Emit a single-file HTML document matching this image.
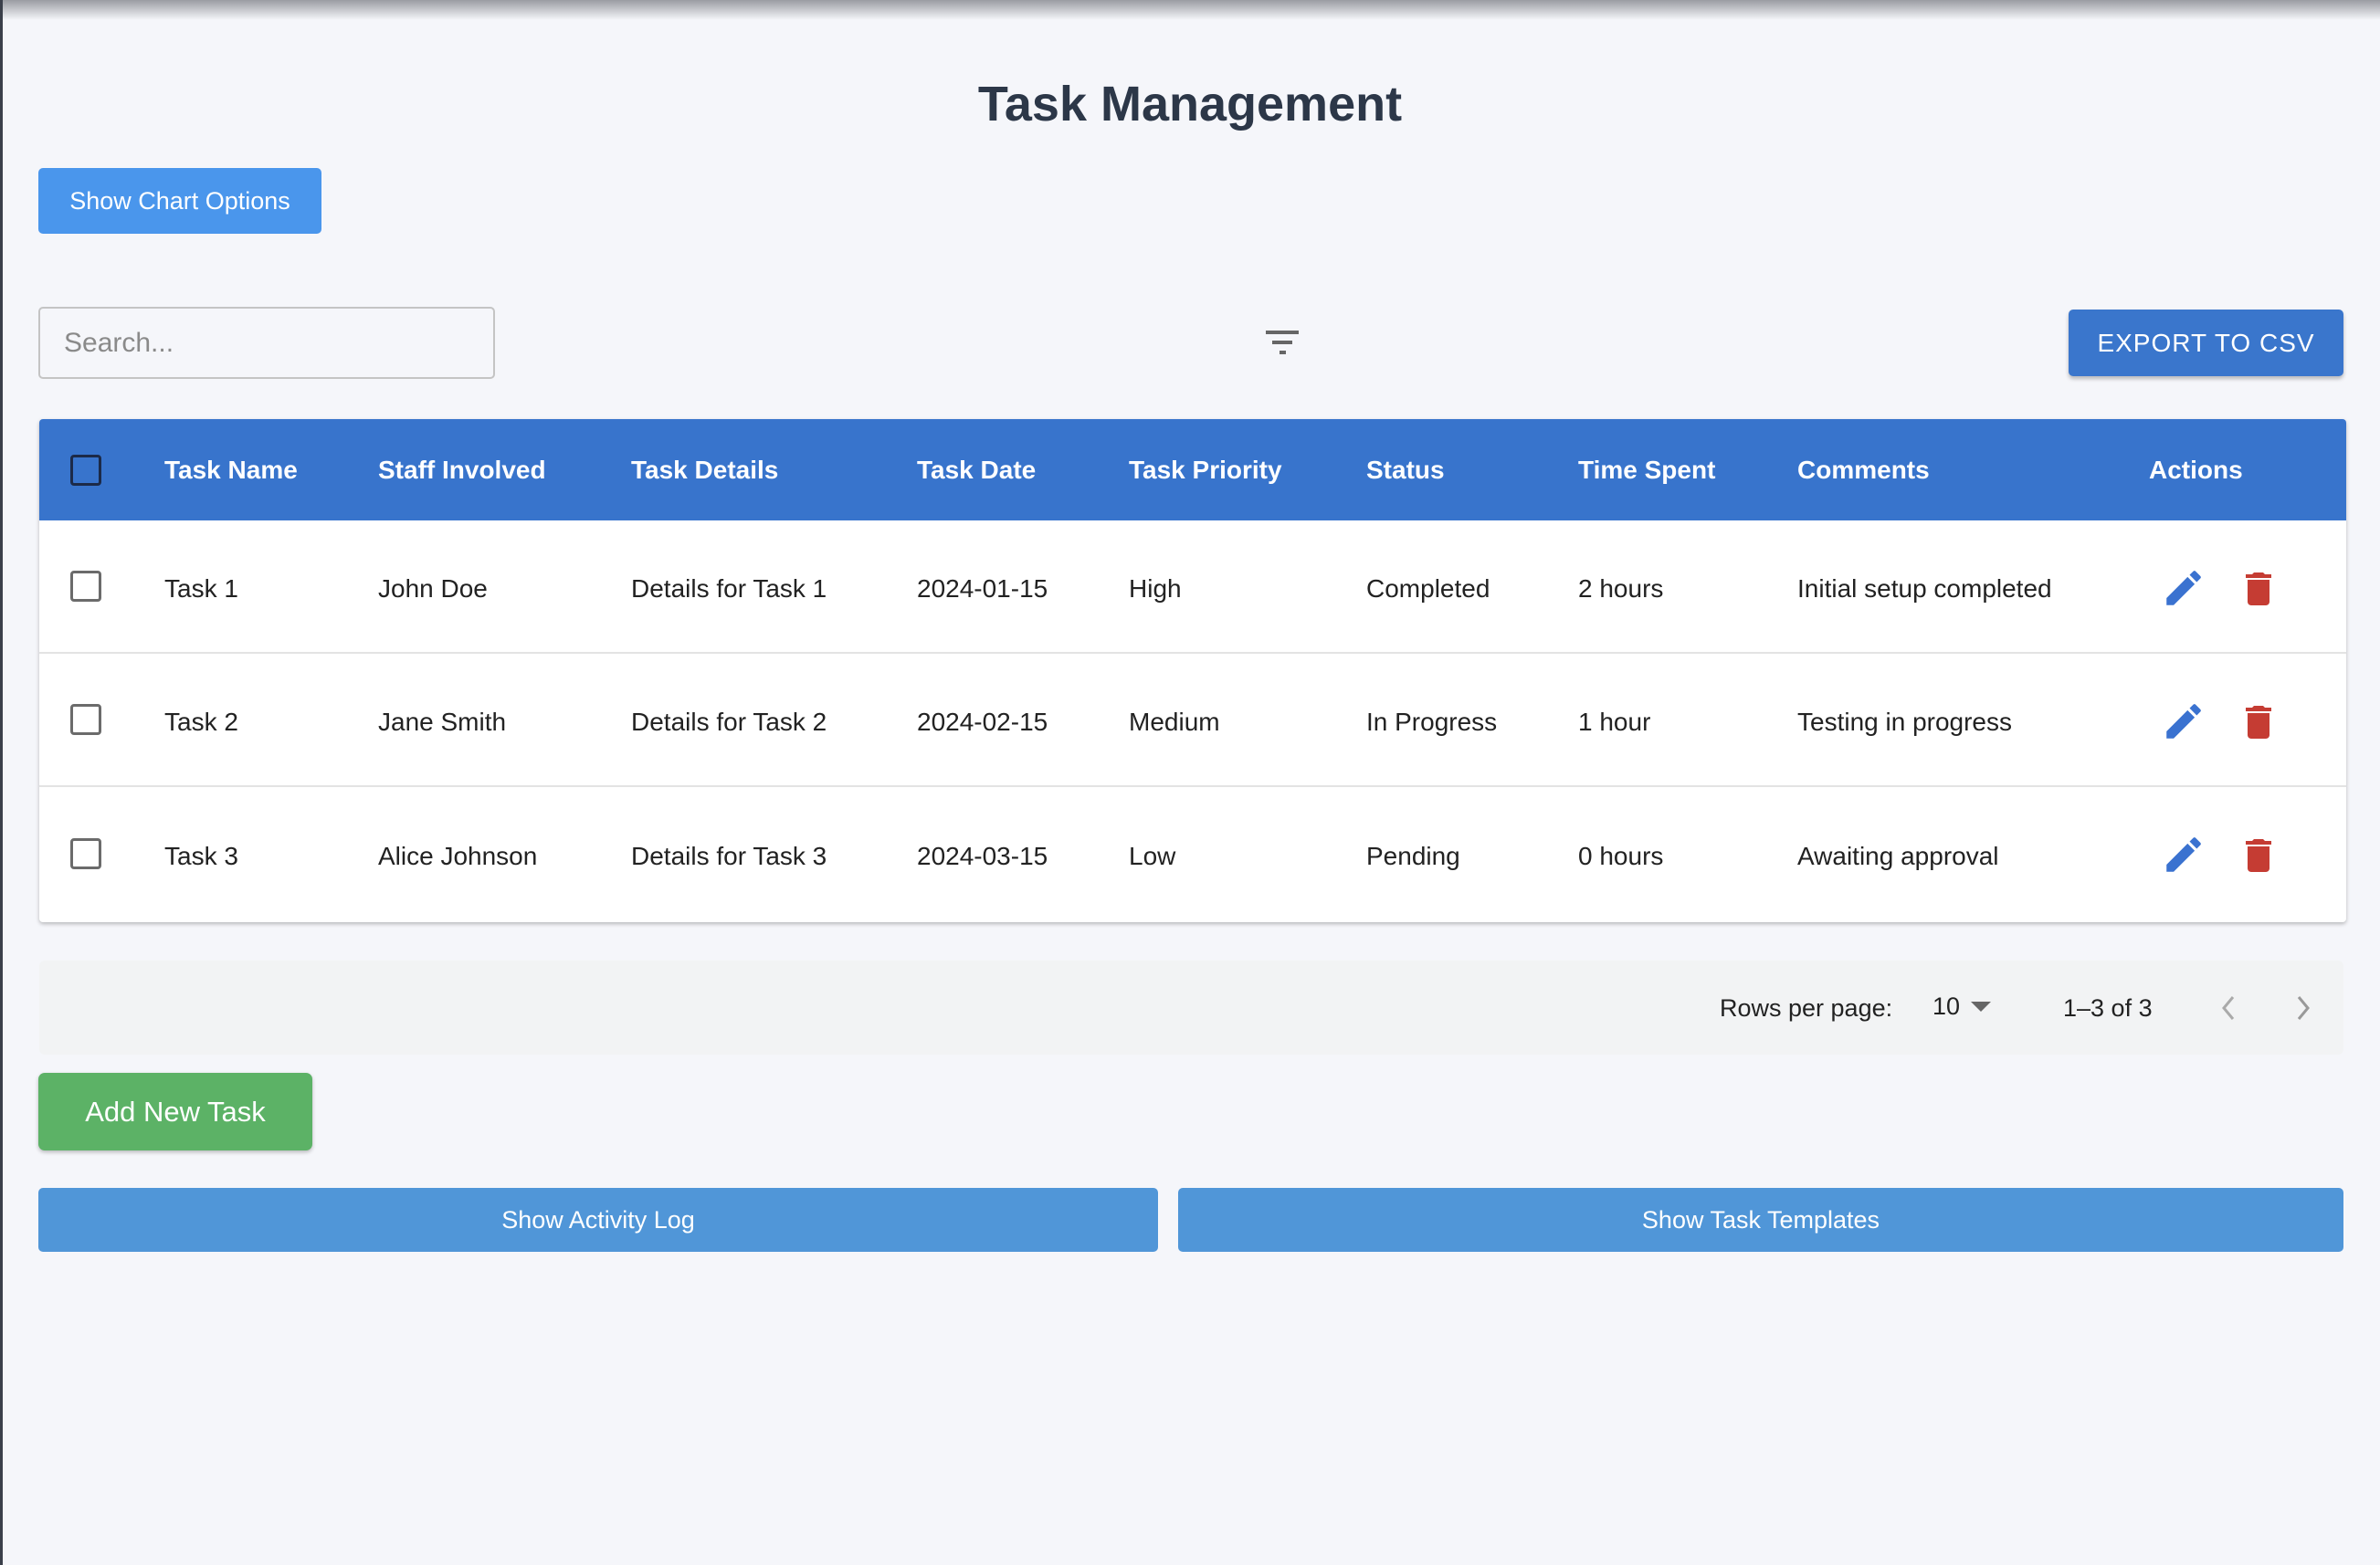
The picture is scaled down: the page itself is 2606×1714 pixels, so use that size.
<!DOCTYPE html>
<html><head><meta charset="utf-8"><style>
*{box-sizing:border-box;margin:0;padding:0}
body{width:2606px;height:1714px;background:#f5f6fa;font-family:"Liberation Sans",Arial,sans-serif;position:relative;overflow:hidden;color:#222}
.abs{position:absolute}
.topsh{left:0;top:0;width:2606px;height:22px;background:linear-gradient(#9a9ca2,#f5f6fa)}
.lb{left:0;top:0;width:3px;height:1714px;background:#3a3f4a}
h1{position:absolute;left:0;width:2606px;top:83px;text-align:center;font-size:54px;font-weight:bold;color:#2c3748}
.btn{position:absolute;color:#fff;display:flex;align-items:center;justify-content:center;border-radius:5px}
.table{left:43px;top:459px;width:2526px;height:551px;background:#fff;box-shadow:0 2px 4px rgba(0,0,0,.25);border-radius:4px;overflow:hidden}
.hdr{left:0;top:0;width:2526px;height:111px;background:#3874cc}
.row{left:0;width:2526px;height:146px;border-bottom:2px solid #e3e3e3}
.c{position:absolute;font-size:28px;top:50%;transform:translateY(-50%);white-space:nowrap}
.row .c{margin-top:3px}
.hdr .c{color:#fff;font-weight:bold}
.cb{position:absolute;left:34px;top:50%;transform:translateY(-50%);width:34px;height:34px;border:3px solid #6b6b6b;border-radius:4px}
</style></head><body>
<div class="abs topsh"></div><div class="abs lb"></div>
<h1>Task Management</h1>
<div class="btn" style="left:42px;top:184px;width:310px;height:72px;background:#4a96ec;font-size:27px">Show Chart Options</div>
<div class="abs" style="left:42px;top:336px;width:500px;height:79px;border:2px solid #c4c4c4;border-radius:5px;font-size:30px;color:#8a8a8a;padding:21px 0 0 26px">Search...</div>
<svg class="abs" style="left:1384px;top:358px" width="40" height="36" viewBox="0 0 40 36"><rect x="2" y="4" width="36" height="4" fill="#666"/><rect x="9" y="15" width="22" height="4" fill="#666"/><rect x="17" y="26" width="7" height="4" fill="#666"/></svg>
<div class="btn" style="left:2265px;top:339px;width:301px;height:73px;background:#3a76cc;font-size:28px;letter-spacing:1px;box-shadow:0 3px 4px rgba(0,0,0,.25)">EXPORT TO CSV</div>
<div class="abs table">
 <div class="abs hdr"><div class="cb" style="border-color:#1c2a48"></div>
  <div class="c" style="left:137px">Task Name</div><div class="c" style="left:371px">Staff Involved</div><div class="c" style="left:648px">Task Details</div><div class="c" style="left:961px">Task Date</div><div class="c" style="left:1193px">Task Priority</div><div class="c" style="left:1453px">Status</div><div class="c" style="left:1685px">Time Spent</div><div class="c" style="left:1925px">Comments</div><div class="c" style="left:2310px">Actions</div>
 </div>
 <div class="abs row" style="top:111px"><div class="cb"></div><div class="c" style="left:137px">Task 1</div><div class="c" style="left:371px">John Doe</div><div class="c" style="left:648px">Details for Task 1</div><div class="c" style="left:961px">2024-01-15</div><div class="c" style="left:1193px">High</div><div class="c" style="left:1453px">Completed</div><div class="c" style="left:1685px">2 hours</div><div class="c" style="left:1925px">Initial setup completed</div>
  <svg class="abs" style="left:2323px;top:49px" width="50" height="50" viewBox="0 0 24 24"><path fill="#3a72d0" d="M3 17.25V21h3.75L17.81 9.94l-3.75-3.75L3 17.25zM20.71 7.04a1 1 0 0 0 0-1.41l-2.34-2.34a1 1 0 0 0-1.41 0l-1.83 1.83 3.75 3.75 1.83-1.83z"/></svg>
  <svg class="abs" style="left:2406px;top:51px" width="48" height="48" viewBox="0 0 24 24"><path fill="#c53c33" d="M6 19c0 1.1.9 2 2 2h8c1.1 0 2-.9 2-2V7H6v12zM19 4h-3.5l-1-1h-5l-1 1H5v2h14V4z"/></svg></div>
 <div class="abs row" style="top:257px"><div class="cb"></div><div class="c" style="left:137px">Task 2</div><div class="c" style="left:371px">Jane Smith</div><div class="c" style="left:648px">Details for Task 2</div><div class="c" style="left:961px">2024-02-15</div><div class="c" style="left:1193px">Medium</div><div class="c" style="left:1453px">In Progress</div><div class="c" style="left:1685px">1 hour</div><div class="c" style="left:1925px">Testing in progress</div>
  <svg class="abs" style="left:2323px;top:49px" width="50" height="50" viewBox="0 0 24 24"><path fill="#3a72d0" d="M3 17.25V21h3.75L17.81 9.94l-3.75-3.75L3 17.25zM20.71 7.04a1 1 0 0 0 0-1.41l-2.34-2.34a1 1 0 0 0-1.41 0l-1.83 1.83 3.75 3.75 1.83-1.83z"/></svg>
  <svg class="abs" style="left:2406px;top:51px" width="48" height="48" viewBox="0 0 24 24"><path fill="#c53c33" d="M6 19c0 1.1.9 2 2 2h8c1.1 0 2-.9 2-2V7H6v12zM19 4h-3.5l-1-1h-5l-1 1H5v2h14V4z"/></svg></div>
 <div class="abs row" style="top:403px;border-bottom:none"><div class="cb"></div><div class="c" style="left:137px">Task 3</div><div class="c" style="left:371px">Alice Johnson</div><div class="c" style="left:648px">Details for Task 3</div><div class="c" style="left:961px">2024-03-15</div><div class="c" style="left:1193px">Low</div><div class="c" style="left:1453px">Pending</div><div class="c" style="left:1685px">0 hours</div><div class="c" style="left:1925px">Awaiting approval</div>
  <svg class="abs" style="left:2323px;top:49px" width="50" height="50" viewBox="0 0 24 24"><path fill="#3a72d0" d="M3 17.25V21h3.75L17.81 9.94l-3.75-3.75L3 17.25zM20.71 7.04a1 1 0 0 0 0-1.41l-2.34-2.34a1 1 0 0 0-1.41 0l-1.83 1.83 3.75 3.75 1.83-1.83z"/></svg>
  <svg class="abs" style="left:2406px;top:51px" width="48" height="48" viewBox="0 0 24 24"><path fill="#c53c33" d="M6 19c0 1.1.9 2 2 2h8c1.1 0 2-.9 2-2V7H6v12zM19 4h-3.5l-1-1h-5l-1 1H5v2h14V4z"/></svg></div>
</div>
<div class="abs" style="left:43px;top:1052px;width:2523px;height:103px;background:#f2f3f4;border-radius:6px"></div>
<div class="abs" style="left:1883px;top:1089px;font-size:27px">Rows per page:</div>
<div class="abs" style="left:2116px;top:1087px;font-size:27px">10</div>
<svg class="abs" style="left:2158px;top:1097px" width="22" height="12"><path d="M0 0h22L11 11z" fill="#666"/></svg>
<div class="abs" style="left:2259px;top:1089px;font-size:27px">1–3 of 3</div>
<svg class="abs" style="left:2430px;top:1089px" width="20" height="30"><path d="M15 3L5 15l10 12" stroke="#aaa" stroke-width="3" fill="none"/></svg>
<svg class="abs" style="left:2512px;top:1089px" width="20" height="30"><path d="M5 3l10 12L5 27" stroke="#999" stroke-width="3" fill="none"/></svg>
<div class="btn" style="left:42px;top:1175px;width:300px;height:85px;background:#5cb266;font-size:31px;border-radius:7px;box-shadow:0 2px 4px rgba(0,0,0,.25)">Add New Task</div>
<div class="btn" style="left:42px;top:1301px;width:1226px;height:70px;background:#5096d8;font-size:27px">Show Activity Log</div>
<div class="btn" style="left:1290px;top:1301px;width:1276px;height:70px;background:#5096d8;font-size:27px">Show Task Templates</div>
</body></html>
